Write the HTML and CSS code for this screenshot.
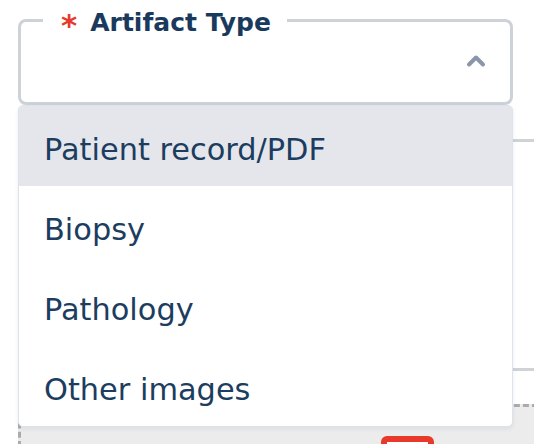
FILE: index.html
```html
<!DOCTYPE html>
<html lang="en">
<head>
<meta charset="utf-8">
<title>Artifact Type</title>
<link rel="stylesheet" href="styles.css">
</head>
<body>
<div class="page">
  <div class="field-wrap">
    <fieldset class="select">
      <legend class="select-label"><span class="req">*</span>Artifact Type</legend>
      <div class="select-control">
        <svg class="chevron" width="22" height="14" viewBox="0 0 22 14" aria-hidden="true">
          <polyline points="4,10.5 11,3.5 18,10.5" fill="none" stroke="#8c96aa" stroke-width="4" stroke-linecap="round" stroke-linejoin="round"/>
        </svg>
      </div>
    </fieldset>
    <ul class="menu">
      <li class="option active">Patient record/PDF</li>
      <li class="option">Biopsy</li>
      <li class="option">Pathology</li>
      <li class="option">Other images</li>
    </ul>
  </div>
  <div class="behind-box"></div>
  <div class="dropzone">
    <div class="file-icon"></div>
  </div>
</div>
</body>
</html>
```

FILE: styles.css
```css
html, body {
  margin: 0;
  padding: 0;
  background: #ffffff;
  overflow: hidden;
}

body {
  font-family: "DejaVu Sans", Verdana, sans-serif;
  color: #1b3b5e;
}

.page {
  box-sizing: border-box;
  width: 534px;
  height: 444px;
  padding-left: 18px;
  overflow: hidden;
}

.field-wrap {
  position: relative;
  width: 495px;
}

.select {
  margin: 0;
  padding: 0;
  width: 495px;
  box-sizing: border-box;
  border: 3px solid #cdd2d8;
  border-radius: 8px;
  min-inline-size: 0;
}

.select-label {
  margin-left: 22px;
  padding: 8px 16px 0 18px;
  font-size: 25px;
  font-weight: bold;
  line-height: 30px;
  color: #1a3a5d;
}

.req {
  color: #e63b2c;
  font-size: 31px;
  vertical-align: -5px;
  margin-right: 13px;
}

.select-control {
  height: 62px;
  box-sizing: border-box;
  display: flex;
  justify-content: flex-end;
  align-items: flex-start;
  padding: 14px 23px 0 0;
}

.chevron {
  display: block;
}

.menu {
  position: absolute;
  top: 105px;
  left: 0;
  width: 495px;
  box-sizing: border-box;
  margin: 0;
  padding: 0;
  list-style: none;
  background: #ffffff;
  border: 1px solid #dde2ec;
  border-radius: 5px;
  overflow: hidden;
  box-shadow: 0 2px 4px rgba(30, 50, 80, 0.08);
  z-index: 2;
}

.option {
  height: 80px;
  box-sizing: border-box;
  padding: 26px 23px 0 25px;
  font-size: 30.4px;
  line-height: 35px;
  color: #1c3d5f;
  white-space: nowrap;
}

.option.active {
  background: #e4e6eb;
}

.behind-box {
  margin-top: 34px;
  margin-right: -40px;
  height: 232px;
  box-sizing: border-box;
  border: 3px solid #cfd3d8;
  border-radius: 8px;
}

.dropzone {
  margin-top: 33px;
  margin-right: -40px;
  height: 80px;
  box-sizing: border-box;
  border: 3px dashed #ababab;
  background: #ececec;
  padding: 29px 0 0 360px;
}

.file-icon {
  width: 53px;
  height: 60px;
  box-sizing: border-box;
  border: 6px solid #e8392a;
  border-radius: 6px;
  background: #ffffff;
}
```
